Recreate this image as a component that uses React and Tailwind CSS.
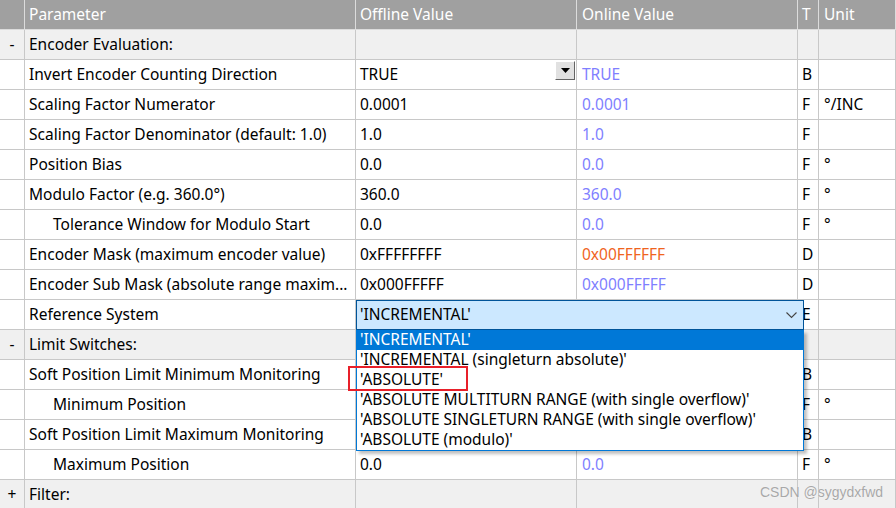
import React from "react";

const FONT = { fontFamily: '"Noto Sans", "Open Sans", sans-serif' };

const rows = [
  { group: true, sign: "-", name: "Encoder Evaluation:" },
  { name: "Invert Encoder Counting Direction", off: "TRUE", on: "TRUE", t: "B", unit: "", combo: true },
  { name: "Scaling Factor Numerator", off: "0.0001", on: "0.0001", t: "F", unit: "°/INC" },
  { name: "Scaling Factor Denominator (default: 1.0)", off: "1.0", on: "1.0", t: "F", unit: "" },
  { name: "Position Bias", off: "0.0", on: "0.0", t: "F", unit: "°" },
  { name: "Modulo Factor (e.g. 360.0°)", off: "360.0", on: "360.0", t: "F", unit: "°" },
  { name: "Tolerance Window for Modulo Start", indent: true, off: "0.0", on: "0.0", t: "F", unit: "°" },
  { name: "Encoder Mask (maximum encoder value)", off: "0xFFFFFFFF", on: "0x00FFFFFF", onOrange: true, t: "D", unit: "" },
  { name: "Encoder Sub Mask (absolute range maxim...", off: "0x000FFFFF", on: "0x000FFFFF", t: "D", unit: "" },
  { name: "Reference System", select: true, off: "", on: "", t: "E", unit: "" },
  { group: true, sign: "-", name: "Limit Switches:" },
  { name: "Soft Position Limit Minimum Monitoring", off: "", on: "", t: "B", unit: "" },
  { name: "Minimum Position", indent: true, off: "", on: "", t: "F", unit: "°" },
  { name: "Soft Position Limit Maximum Monitoring", off: "", on: "", t: "B", unit: "" },
  { name: "Maximum Position", indent: true, off: "0.0", on: "0.0", t: "F", unit: "°" },
  { group: true, sign: "+", name: "Filter:" },
];

const options = [
  "'INCREMENTAL'",
  "'INCREMENTAL (singleturn absolute)'",
  "'ABSOLUTE'",
  "'ABSOLUTE MULTITURN RANGE (with single overflow)'",
  "'ABSOLUTE SINGLETURN RANGE (with single overflow)'",
  "'ABSOLUTE (modulo)'",
];

const GRID = "grid grid-cols-[25px_331px_221px_221px_21px_1fr]";
const CELL = "h-[30px] border-r border-b border-[#c8c8c8] flex items-center overflow-hidden whitespace-nowrap";

function Row({ r }) {
  const bg = r.group ? "bg-[#f0f0f0]" : "bg-white";
  return (
    <div className={`${GRID} ${bg} text-[15.5px] text-black`}>
      <div className={`${CELL} justify-center`}>{r.group ? r.sign : ""}</div>
      <div className={`${CELL} ${r.indent ? "pl-[28px]" : "pl-[4px]"}`}>{r.name}</div>
      <div className={`${CELL} pl-[4px] relative overflow-visible`}>
        {r.off}
        {r.combo && (
          <div className="absolute right-[1px] top-[1px] w-[20px] h-[19px] bg-[#e1e1e1] border border-t-white border-l-white border-r-[#646464] border-b-[#646464] flex items-center justify-center">
            <svg width="9" height="5" viewBox="0 0 9 5"><path d="M0 0h9L4.5 5z" fill="#000" /></svg>
          </div>
        )}
        {r.select && (
          <>
            <div className="absolute left-0 top-0 w-[448px] h-[30px] bg-[#cce8ff] border border-[#005499] z-10 flex items-center pl-[3px] pr-[6px] justify-between">
              <span>'INCREMENTAL'</span>
              <svg width="11" height="7" viewBox="0 0 11 7"><path d="M0.5 0.5L5.5 5.5L10.5 0.5" fill="none" stroke="#444" strokeWidth="1.1" /></svg>
            </div>
            <div className="absolute left-0 top-[30px] w-[448px] bg-white border border-[#0078d7] border-t-0 z-10 shadow-[3px_3px_3px_rgba(0,0,0,0.25)] flex flex-col">
              {options.map((o, i) => (
                <div key={i} className={`h-[20px] leading-[19px] pl-[3px] ${i === 0 ? "bg-[#0078d7] text-white" : "text-black"}`}>{o}</div>
              ))}
            </div>
          </>
        )}
      </div>
      <div className={`${CELL} pl-[5px] ${r.onOrange ? "text-[#f0641e]" : "text-[#7f7fff]"}`}>{r.on}</div>
      <div className={`${CELL} pl-[4px]`}>{r.t}</div>
      <div className={`${CELL} pl-[5px]`}>{r.unit}</div>
    </div>
  );
}

export default function App() {
  const headCell = "h-[30px] border-r border-b border-[#dcdcdc] flex items-center pl-[4px] whitespace-nowrap overflow-hidden";
  return (
    <div className="relative w-[896px] h-[508px] overflow-hidden bg-white" style={FONT}>
      <div className={`${GRID} bg-[#a0a0a0] text-white text-[15.5px]`}>
        <div className={headCell}></div>
        <div className={headCell}>Parameter</div>
        <div className={headCell}>Offline Value</div>
        <div className={`${headCell} pl-[5px]`}>Online Value</div>
        <div className={headCell}>T</div>
        <div className={`${headCell} pl-[5px]`}>Unit</div>
      </div>
      {rows.map((r, i) => (
        <Row key={i} r={r} />
      ))}
      <div className="absolute left-[348px] top-[366px] w-[120px] h-[25px] border-2 border-[#e8202a] z-20 pointer-events-none" />
      <div className="absolute left-[760px] top-[482px] text-[14px] text-[#a8a8a8] z-20 whitespace-nowrap" style={{ fontFamily: '"Liberation Sans", Arial, sans-serif', textShadow: "0 0 1px rgba(255,255,255,0.8)" }}>
        CSDN @sygydxfwd
      </div>
    </div>
  );
}
